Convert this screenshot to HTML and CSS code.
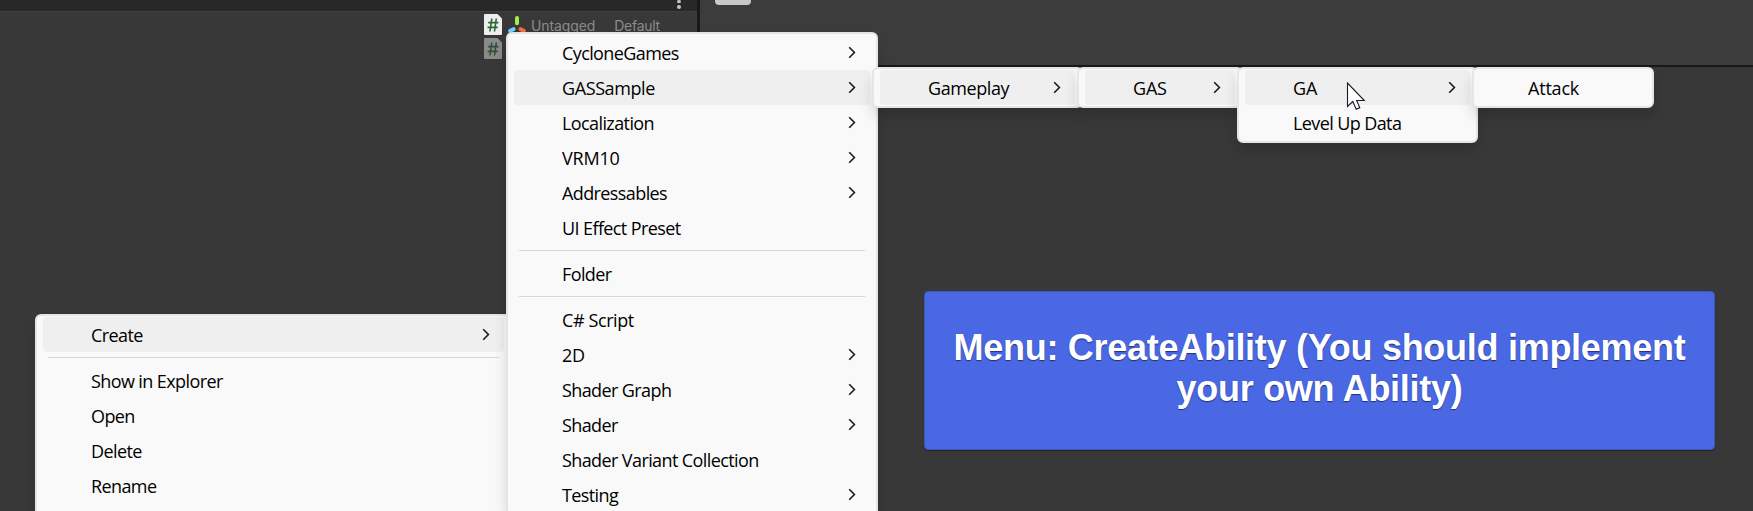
FILE: index.html
```html
<!DOCTYPE html>
<html lang="en">
<head>
<meta charset="utf-8">
<title>Create Ability</title>
<link rel="stylesheet" href="styles.css">
</head>
<body>
<svg class="defs" width="0" height="0">
  <symbol id="chev" viewBox="0 0 8 13"><path d="M1.2 1.200 6.400 6.500 1.200 11.800" fill="none" stroke="#1c1c1c" stroke-width="1.600"/></symbol>
  <symbol id="script" viewBox="0 0 18 21"><path d="M1 0H13.500L18 4.500V20a1 1 0 0 1-1 1H1a1 1 0 0 1-1-1V1a1 1 0 0 1 1-1Z" fill="#eee"/><path d="M7.800 4.500 6 17.500M12.300 4.500 10.500 17.500M4.200 8.600H14.400M3.600 13.400H13.800" stroke="#2a6a34" stroke-width="1.600" fill="none"/></symbol>
</svg>
<div class="editor">
  <section class="left">
    <header class="bar"><i class="dots"><b></b><b></b></i></header>
    <div class="row"><svg class="file" width="18" height="21"><use href="#script"/></svg>
      <svg class="axes" width="20" height="20" viewBox="0 0 20 20"><path d="M10 4V9.200" stroke="#a4ef45"/><path d="M3.200 16.800 6.500 15.200" stroke="#6fd0ff"/><path d="M13.500 15.200 16.800 16.800" stroke="#ff6a3c"/></svg>
      <span class="tag">Untagged</span><span class="layer">Default</span></div>
    <div class="row second"><svg class="file dim" width="18" height="21"><use href="#script"/></svg></div>
  </section>
  <section class="right"><div class="toolbar"><i class="knob"></i></div>
    <div class="scene"><div class="banner">Menu: CreateAbility (You should implement your own Ability)</div></div>
  </section>
</div>
<nav class="menu context">
  <div class="item on"><span>Create</span><svg><use href="#chev"/></svg></div><hr>
  <div class="item"><span>Show in Explorer</span></div>
  <div class="item"><span>Open</span></div>
  <div class="item"><span>Delete</span></div>
  <div class="item"><span>Rename</span></div>
</nav>
<nav class="menu create">
  <div class="item"><span>CycloneGames</span><svg><use href="#chev"/></svg></div>
  <div class="item on mid"><span>GASSample</span><svg><use href="#chev"/></svg></div>
  <div class="item"><span>Localization</span><svg><use href="#chev"/></svg></div>
  <div class="item caps"><span>VRM10</span><svg><use href="#chev"/></svg></div>
  <div class="item"><span>Addressables</span><svg><use href="#chev"/></svg></div>
  <div class="item"><span>UI Effect Preset</span></div><hr>
  <div class="item"><span>Folder</span></div><hr>
  <div class="item mid"><span>C# Script</span></div>
  <div class="item caps"><span>2D</span><svg><use href="#chev"/></svg></div>
  <div class="item"><span>Shader Graph</span><svg><use href="#chev"/></svg></div>
  <div class="item"><span>Shader</span><svg><use href="#chev"/></svg></div>
  <div class="item"><span>Shader Variant Collection</span></div>
  <div class="item"><span>Testing</span><svg><use href="#chev"/></svg></div>
</nav>
<nav class="menu gameplay"><div class="item on"><span>Gameplay</span><svg><use href="#chev"/></svg></div></nav>
<nav class="menu gas"><div class="item on caps"><span>GAS</span><svg><use href="#chev"/></svg></div></nav>
<nav class="menu ga"><div class="item on caps"><span>GA</span><svg><use href="#chev"/></svg></div><div class="item"><span>Level Up Data</span></div></nav>
<nav class="menu attack"><div class="item caps"><span>Attack</span></div></nav>
<svg class="cursor" width="20" height="29" viewBox="0 0 20 29"><path d="M1.500 1V24.500L6.800 19.500 10.200 27.200 13.800 25.600 10.600 18.500H18.300Z" fill="#fff" stroke="#1a1a24" stroke-width="1.100"/></svg>
</body>
</html>
```
FILE: styles.css
```css
* { box-sizing: border-box; }
body { margin: 0; width: 1753px; height: 511px; overflow: hidden; position: relative; background: #383838; font-family: "Open Sans", "Noto Sans", sans-serif; }
.defs { position: absolute; }
.editor { display: flex; height: 511px; }
.left { width: 700px; border-right: 3px solid #191919; }
.bar { height: 12px; background: #282828; border-bottom: 1px solid #404040; display: flex; justify-content: flex-end; padding-right: 16px; }
.dots { display: flex; flex-direction: column; gap: 2px; }
.dots b { width: 4px; height: 4px; border-radius: 2px; background: #c4c4c4; }
.dots b:first-child { height: 3px; }
.row { height: 24px; padding-left: 484px; display: flex; align-items: center; border-bottom: 1px solid #353535; font: 14px Inter, sans-serif; color: #8b8b8b; }
.file { flex: none; margin-top: 2px; }
.dim { opacity: .45; }
.axes { margin: 1px 0 0 5px; fill: none; stroke-width: 4; stroke-linecap: round; }
.tag { margin-left: 4px; margin-top: 3px; letter-spacing: -.1px; }
.layer { margin-left: 19px; margin-top: 3px; letter-spacing: -.3px; }
.right { flex: 1; display: flex; flex-direction: column; }
.toolbar { height: 67px; background: #3c3c3c; border-bottom: 2px solid #191919; padding-left: 15px; }
.knob { display: block; width: 36px; height: 5px; background: #c8c8c8; border-radius: 0 0 4px 4px; }
.scene { padding: 224px 0 0 224px; }
.banner { width: 791px; height: 159px; padding: 35px 20px; background: #4a68e4; border: 1px solid #3e56b4; border-radius: 4px; box-shadow: 0 1px 1px #222; color: #fff; font: bold 36px/41px "Liberation Sans", sans-serif; letter-spacing: -.28px; text-align: center; text-shadow: 0 1px 1px rgba(20,30,80,.75); }
.menu { position: absolute; padding: 1px 6px; background: #f9f9f9; border: 2px solid #e5e5e5; border-radius: 6px; box-shadow: 0 8px 14px -1px rgba(0,0,0,.16); }
.item { height: 35px; padding: 0 14px 0 48px; border-radius: 4px; display: flex; align-items: center; justify-content: space-between; font-size: 18px; line-height: 24px; letter-spacing: -.6px; color: #000; white-space: nowrap; }
.caps { letter-spacing: -.2px; }
.mid, .gameplay .item { letter-spacing: -.4px; }
.item svg { width: 8px; height: 13px; margin-bottom: 1px; }
.on { background: #efefef; }
hr { border: 0; height: 1px; margin: 5px; background: #d7d7d7; }
.context, .create { bottom: 0; overflow: hidden; border-bottom: 0; border-radius: 6px 6px 0 0; }
.context { left: 35px; top: 314px; width: 477px; }
.create { left: 506px; top: 32px; width: 372px; }
.gameplay { left: 872px; top: 67px; width: 211px; }
.gas { left: 1077px; top: 67px; width: 166px; }
.ga { left: 1237px; top: 67px; width: 241px; }
.attack { left: 1472px; top: 67px; width: 182px; }
.cursor { position: absolute; left: 1346px; top: 82px; }
```
